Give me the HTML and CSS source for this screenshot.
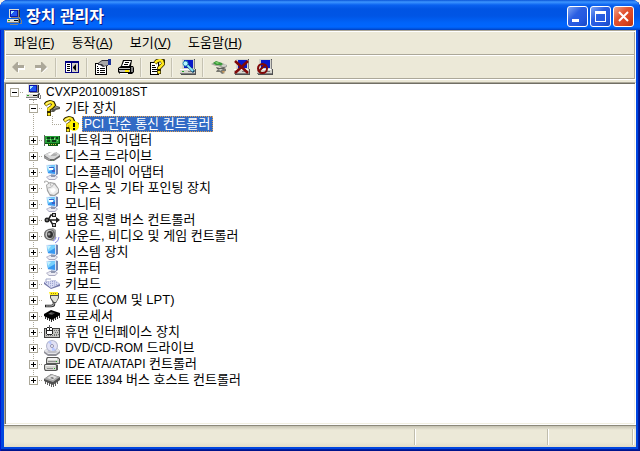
FILE: index.html
```
<!DOCTYPE html>
<html lang="ko">
<head>
    <meta charset="UTF-8">
    <meta name="viewport" content="width=device-width, initial-scale=1.0">
    <title>장치 관리자</title>
    <link rel="stylesheet" href="styles.css">
</head>
<body>
    <!-- Icon set, 16x16 grid -->
    <svg class="sprite" aria-hidden="true">
        <symbol id="i-computer" viewBox="0 0 16 16">
            <path fill="#303030" d="M5 1h9v8h-9zM2 10h12v4h-12z"/>
            <path fill="#dcdcd4" d="M3 0h10v9h-10zM1 10h12v3h-12z"/>
            <path fill="#808080" d="M12 1h1v8h-8v-1h7zM1 13h12v1h-12zM12 10h1v4h-1z"/>
            <path fill="#0a14a8" d="M4 1h8v7h-8z"/>
            <path fill="#2058f0" d="M5 2h6v5h-6z"/>
            <path fill="#a8e8ff" d="M5 2h3v1h-1v1h-1v1h-1z"/>
            <path fill="#000" d="M8 11h4v1h-4z"/>
            <path fill="#20a020" d="M2 11h2v1h-2z"/>
            <path fill="#808080" d="M13 8h1v1h1v2h1v4h-2v-1h1v-3h-1v-1h-1zM4 15h8v1h-8z"/>
        </symbol>
        <symbol id="i-question" viewBox="0 0 16 16">
            <path fill="#585850" d="M8 8l5-2 3 1v2l-4 1-2 2-3 0z"/>
            <path fill="#a8a8a0" d="M9 8l4-1 2 0-5 2z"/>
            <path fill="none" stroke="#302800" stroke-width="4" d="M1 5l2-2 3-1 3 1 1 2-2 2-3 2v3M5 12v4"/>
            <path fill="none" stroke="#ffe81c" stroke-width="2.500" d="M1.500 5l2-2 3-1 2 1 1 2-2 2-3 2v2M5 13v2.500"/>
            <path fill="none" stroke="#fff8a0" d="M2 4l2-1 2-1"/>
        </symbol>
        <symbol id="i-unknown" viewBox="0 0 16 16">
            <use href="#i-question"/>
            <circle cx="11" cy="10" r="5" fill="#fff200"/>
            <path fill="#000" d="M10 7h2v4h-2zM10 12h2v2h-2z"/>
        </symbol>
        <symbol id="i-network" viewBox="0 0 16 16">
            <path fill="#606860" d="M0 3h1v11h-1z"/>
            <path fill="#085c10" d="M1 4h15v8h-2v2h-10v-2h-3z"/>
            <path fill="#28a038" d="M1 4h14v7h-14z"/>
            <path fill="#0c3c14" d="M3 5h3v2h-3zM7 5h3v2h-3zM12 5h2v2h-2zM3 8h3v2h-3zM8 8h4v2h-4z"/>
            <path fill="#8cd48c" d="M2 7h1v1h-1zM6 7h1v1h-1zM10 6h1v2h-1zM13 8h1v1h-1z"/>
            <path fill="#d8c84c" d="M5 12h1v1h-1zM7 12h1v1h-1zM9 12h1v1h-1zM11 12h1v1h-1z"/>
        </symbol>
        <symbol id="i-disk" viewBox="0 0 16 16">
            <path fill="#686868" d="M0 7l6-3h6l4 3v2l-6 4H5L0 10z"/>
            <path fill="#989898" d="M0 8l6 3v2L0 10z"/>
            <path fill="#d8d8d8" d="M0 7l6-3h6l4 3-6 4H6z"/>
            <ellipse cx="9" cy="6.500" rx="4" ry="1.500" fill="#b0b0b0"/>
            <path fill="#fff" d="M4 6l4-2h3L6 8z"/>
            <path fill="#60a060" d="M8 12h1v1h-1z"/>
        </symbol>
        <symbol id="i-monitor" viewBox="0 0 16 16">
            <path fill="#a8a8c0" d="M2 13l4-2h5l3 2-3 3H5z"/>
            <path fill="#ececf4" d="M3 13l3-1h5l2 1-2 2H5z"/>
            <path fill="#9098b0" d="M7 10h4v3h-4z"/>
            <path fill="#7484b0" d="M11 0l3 1v9l-3 2z"/>
            <path fill="#d8e4f8" d="M2 1l10-1v11L4 10z"/>
            <path fill="#3898f0" d="M3 2l8-1v9L4 9z"/>
            <path fill="#78d0fc" d="M3 2l8-1v3L4 8z"/>
            <path fill="#c0f0ff" d="M3 2l4 0-3 4z"/>
        </symbol>
        <symbol id="i-display" viewBox="0 0 16 16">
            <use href="#i-monitor"/>
            <path fill="#3c60c8" d="M5 3h5v1h-5zM8 6h3v2h-3z"/>
            <path fill="#fff" d="M5 4h4v2h-4z"/>
        </symbol>
        <symbol id="i-mouse" viewBox="0 0 16 16">
            <path fill="none" stroke="#a8a8a8" d="M5 5Q5 1 2 1T1 3"/>
            <path fill="#a0a0a0" d="M2 5l4-3 5 1 4 6 0 4-4 3-5 0-3-5z"/>
            <path fill="#ececec" d="M3 5l3-2 4 1 4 5 0 3-4 3-4-1-2-4z"/>
            <path fill="none" stroke="#b8b8b8" d="M4 8q4 0 6-4M6 3l1 3"/>
            <path fill="#fff" d="M6 9l4-1 2 2-3 3-2-1z"/>
        </symbol>
        <symbol id="i-usb" viewBox="0 0 16 16">
            <path fill="none" stroke="#202020" stroke-width="1.500" d="M2 8h12M4 8l3-5h3M6 8l3 5h3"/>
            <circle cx="3" cy="8" r="2.500" fill="#202020"/>
            <circle cx="3" cy="8" r="1" fill="#888"/>
            <path fill="#202020" d="M12 5l4 3-4 3zM8 1h4v4H8zM8 11h4v4h-4z"/>
            <path fill="#c0c0c0" d="M9 2h2v2h-2zM9 12h2v2h-2z"/>
        </symbol>
        <symbol id="i-sound" viewBox="0 0 16 16">
            <path fill="#a0a0a0" d="M4 1l5-1 3 2v8l-3 3-5-1z"/>
            <ellipse cx="5.500" cy="6.500" rx="5.500" ry="5.500" fill="#686868"/>
            <ellipse cx="5.500" cy="6.500" rx="4" ry="4.500" fill="#c8c8c8"/>
            <ellipse cx="6" cy="6.500" rx="3" ry="3.500" fill="#303030"/>
            <circle cx="5" cy="6" r="1.500" fill="#989898"/>
            <path fill="none" stroke="#8c8ce8" d="M9 13q3-1 3-4M11 15q4-2 4-6"/>
        </symbol>
        <symbol id="i-keyboard" viewBox="0 0 16 16">
            <path fill="none" stroke="#a0a8c8" d="M2 6V3h5"/>
            <path fill="#7478a8" d="M0 6l11-2 5 4v2l-9 3L0 8z"/>
            <path fill="#dcdff6" d="M0 6l11-2 5 4-9 4z"/>
            <path stroke="#9098c8" stroke-dasharray="1 1" d="M2 6.500l10-1.500M4 8l10-1.500M6 10l9-2"/>
        </symbol>
        <symbol id="i-port" viewBox="0 0 16 16">
            <path fill="none" stroke="#202020" stroke-width="2.500" d="M10 9v3q0 2-3 2T1 14"/>
            <path fill="none" stroke="#c0c0c0" d="M10 9v3q0 2-3 2T2 14"/>
            <path fill="#505050" d="M6 1h9v5l-3 5H9L6 6z"/>
            <path fill="#e0e0d8" d="M7 4h7v2l-2 4h-2L7 6z"/>
            <path fill="#ffee20" d="M5 0h9v3H6z"/>
            <path stroke="#a08400" stroke-dasharray="1 1" d="M7 1.500h6"/>
        </symbol>
        <symbol id="i-cpu" viewBox="0 0 16 16">
            <path stroke="#303030" d="M1.500 7v4M3.500 8v4M5.500 9v4M7.500 10v4M9.500 9v4M11.500 8v4M13.500 7v4M15.500 6v4"/>
            <path fill="#000" d="M0 6l7-4 9 3v2l-8 5L0 8z"/>
            <path fill="#484848" d="M4 6l3-2 4 1-3 2z"/>
            <path fill="#909090" d="M5 6l2-1 1 0-2 1z"/>
        </symbol>
        <symbol id="i-hid" viewBox="0 0 16 16">
            <path fill="#404040" d="M0 4h16v10h-16z"/>
            <path fill="#c4c4c0" d="M1 5h14v8h-14z"/>
            <path stroke="#707070" stroke-dasharray="1 1" d="M10 6.500h5M11 8.500h4M10 10.500h5M2 11.500h12"/>
            <path fill="#202020" d="M3 3h5v1h1v6h-1v1h-5v-1h-1v-6h1z"/>
            <path fill="#fff" d="M3 4h2v2h-2zM6 4h2v2h-2zM3 7h5v3h-5z"/>
            <path fill="#606060" d="M5 1h1v3h-1z"/>
        </symbol>
        <symbol id="i-dvd" viewBox="0 0 16 16">
            <path fill="#909098" d="M0 11l4-3h9l3 3v2l-4 3H4l-4-3z"/>
            <path fill="#e4e4e8" d="M0 11l4-3h9l3 3-4 3H4z"/>
            <circle cx="8" cy="6" r="6" fill="#b0b4cc"/>
            <circle cx="8" cy="6" r="5" fill="#e2e2f4"/>
            <path fill="#b8c8ff" d="M8 6L4 2l3-1zM8 6l4 4-4 1z"/>
            <circle cx="8" cy="6" r="1.500" fill="#fff" stroke="#9090b0"/>
            <path fill="#c0c0c8" d="M2 12l3-1h7l2 1-3 1H5z"/>
        </symbol>
        <symbol id="i-ide" viewBox="0 0 16 16">
            <path fill="#585858" d="M3 1h11l2 2v5h-14v-5zM1 8h11l2 1v5l-2 1h-11l-1-2v-4z"/>
            <path fill="#d4d4d0" d="M4 2h9l2 1v4h-12v-4zM1 9h11v5h-10l-1-1z"/>
            <path fill="#f4f4f4" d="M4 2h9v2h-9zM2 9h9v1h-9z"/>
            <path fill="#909090" d="M4 5h8v1h-8zM3 12h6v1h-6z"/>
            <path fill="#20b020" d="M12 5h1v1h-1zM10 12h1v1h-1z"/>
        </symbol>
        <symbol id="i-1394" viewBox="0 0 16 16">
            <path stroke="#606060" d="M1.500 8v4M3.500 9v4M5.500 10v4M7.500 11v4M9.500 11v4M11.500 10v4M13.500 8v4"/>
            <path fill="#505050" d="M0 7l7-5 9 3v3l-7 5-9-4z"/>
            <path fill="#a8a8a8" d="M0 7l7-5 9 3-7 5z"/>
            <path fill="#e0e0e0" d="M3 6l5-3 5 2-4 3z"/>
            <path fill="#707070" d="M6 6l2-1 2 1-1 1z"/>
        </symbol>
        <symbol id="i-back" viewBox="0 0 16 16">
            <path fill="#fff" d="M3 9l6-5v3h6v4h-6v3z"/>
            <path fill="#aca899" d="M2 8l5-5h1v3h6v3h-6v4h-1z"/>
        </symbol>
        <symbol id="i-forward" viewBox="0 0 16 16">
            <path fill="#fff" d="M15 9l-6-5v3h-6v4h6v3z"/>
            <path fill="#aca899" d="M14 8l-5-5h-1v3h-6v3h6v4h1z"/>
        </symbol>
        <symbol id="i-console" viewBox="0 0 16 16">
            <path fill="#000080" d="M1 2h14v12h-14z"/>
            <path fill="#fff" d="M2 4h5v9h-5z"/>
            <path fill="#d4d0c8" d="M8 4h6v9h-6z"/>
            <path fill="#000" d="M3 5h3v1h-3zM3 7h3v1h-3zM3 9h3v1h-3zM3 11h3v1h-3zM12 5v7l-3-3v-1z"/>
        </symbol>
        <symbol id="i-properties" viewBox="0 0 16 16">
            <path fill="#000" d="M0 4h12v12h-12z"/>
            <path fill="#fff" d="M1 5h10v10h-10z"/>
            <path fill="#000" d="M2 9h2v1h-2zM5 9h5v1h-5zM2 11h2v1h-2zM5 11h5v1h-5zM2 13h2v1h-2zM5 13h5v1h-5zM2 7h1v1h-1z"/>
            <path fill="#303038" d="M3 4l4-3 6 0v6h-2l-3 1-3-2-2 0z"/>
            <path fill="#a8a8a8" d="M4 4l3-2 6 0v4l-4 1-2-2-3 0z"/>
            <path fill="#1c3498" d="M13 0h3v6h-3z"/>
        </symbol>
        <symbol id="i-print" viewBox="0 0 16 16">
            <path fill="#000" d="M5 1h9l-1 6h2l1 2v4l-2 2h-12l-2-2v-4l3-2z"/>
            <path fill="#fff" d="M6 2h7l-2 5h-7z"/>
            <path stroke="#000" d="M7 3.500h4M6 5.500h4"/>
            <path fill="#c0c0c0" d="M1 9h11v1h-11zM1 11h11v2h-10l-1-1z"/>
            <path fill="#808080" d="M13 8h2v5h-2z"/>
            <path fill="#ffe800" d="M7 11h4v2h-4z"/>
            <path fill="#fff" d="M2 14h8v1h-8z"/>
        </symbol>
        <symbol id="i-help" viewBox="0 0 16 16">
            <path fill="#000" d="M1 3h9v13h-9z"/>
            <path fill="#fff" d="M2 4h7v11h-7z"/>
            <path fill="#000" d="M3 6h3v1h-3zM3 8h4v1h-4zM3 10h5v1h-5zM3 12h5v1h-5z"/>
            <path fill="none" stroke="#302800" stroke-width="4" d="M6 4l2-2 3-1 3 1 0 3-2 2-2 2v2M10 11v4"/>
            <path fill="none" stroke="#ffe81c" stroke-width="2.500" d="M6 4l2-2 3-1 2 1 1 3-2 2-2 2v1M10 12v2.500"/>
        </symbol>
        <symbol id="i-pc" viewBox="0 0 16 16">
            <path fill="#505050" d="M3 0h12v10h1v6h-15v-1h-1v-5h3z"/>
            <path fill="#d4d4cc" d="M2 0h12v10h-12zM0 10h15v5h-15z"/>
            <path fill="#0818c8" d="M4 1h9v8h-9z"/>
            <path fill="#808080" d="M14 1h1v9h-1zM8 12h5v1h-5zM0 14h15v1h-15z"/>
            <path fill="#fff" d="M0 10h14v1h-14z"/>
            <path fill="#20a020" d="M2 12h2v1h-2z"/>
        </symbol>
        <symbol id="i-scan" viewBox="0 0 16 16">
            <use href="#i-pc"/>
            <path stroke="#003860" stroke-width="3" d="M7 6l7 7"/>
            <path stroke="#90e8f8" stroke-width="2" d="M7 6l6 6"/>
            <circle cx="5.500" cy="4.500" r="2.500" fill="#b8f4ff" stroke="#2888b0"/>
        </symbol>
        <symbol id="i-update" viewBox="0 0 16 16">
            <path fill="#787870" d="M6 11l5-2 4 1v2l-3 1 2 1-3 1-2-2-4 0z"/>
            <path fill="#a8a8a0" d="M0 5l4-2 7 1 5 2v2l-5 1-4-2-2 0-3-1z"/>
            <path fill="#60605c" d="M5 8l4 1 4-1 2 1-5 2-4-1z"/>
            <path fill="#389838" d="M2 4l3-2 6 2 1 3-4-1-3 0z"/>
            <path fill="#80d070" d="M4 3l2 0 3 1-3 1z"/>
            <path fill="#d0d0c8" d="M10 6l5-1v2l-3 1zM8 10l4 0-3 2z"/>
            <path fill="#c89858" d="M11 12l2 0 1 1-2 1z"/>
        </symbol>
        <symbol id="i-uninstall" viewBox="0 0 16 16">
            <use href="#i-pc"/>
            <path stroke="#800808" stroke-width="2.500" d="M1 2l13 12M14 2L1 14"/>
        </symbol>
        <symbol id="i-disable" viewBox="0 0 16 16">
            <use href="#i-pc"/>
            <circle cx="5.500" cy="9.500" r="4.500" fill="none" stroke="#800808" stroke-width="2"/>
            <path stroke="#800808" stroke-width="2" d="M2 12l6-6"/>
        </symbol>
    </svg>

    <div class="window">
        <header class="titlebar">
            <svg class="icon"><use href="#i-computer"/></svg>
            <h1>장치 관리자</h1>
            <div class="caption-buttons">
                <button type="button" aria-label="최소화"><svg viewBox="0 0 21 21"><path fill="#fff" d="M5 13h7v3h-7z"/></svg></button>
                <button type="button" aria-label="최대화"><svg viewBox="0 0 21 21"><path fill="#fff" fill-rule="evenodd" d="M5 5h11v11h-11zM6 8v7h9v-7z"/></svg></button>
                <button type="button" class="close" aria-label="닫기"><svg viewBox="0 0 21 21"><path stroke="#fff" stroke-width="2" d="M6 6l9 9M15 6l-9 9"/></svg></button>
            </div>
        </header>

        <div class="bars">
            <nav class="menubar">
                <button type="button">파일(<u>F</u>)</button>
                <button type="button">동작(<u>A</u>)</button>
                <button type="button">보기(<u>V</u>)</button>
                <button type="button">도움말(<u>H</u>)</button>
            </nav>
            <div class="toolbar">
                <button type="button" aria-label="뒤로" disabled><svg class="icon"><use href="#i-back"/></svg></button>
                <button type="button" aria-label="앞으로" disabled><svg class="icon"><use href="#i-forward"/></svg></button>
                <span class="sep"></span>
                <button type="button" aria-label="콘솔 트리"><svg class="icon"><use href="#i-console"/></svg></button>
                <span class="sep"></span>
                <button type="button" aria-label="속성"><svg class="icon"><use href="#i-properties"/></svg></button>
                <button type="button" aria-label="인쇄"><svg class="icon"><use href="#i-print"/></svg></button>
                <span class="sep"></span>
                <button type="button" aria-label="도움말"><svg class="icon"><use href="#i-help"/></svg></button>
                <span class="sep"></span>
                <button type="button" aria-label="하드웨어 변경 사항 검색"><svg class="icon"><use href="#i-scan"/></svg></button>
                <span class="sep"></span>
                <button type="button" aria-label="드라이버 업데이트"><svg class="icon"><use href="#i-update"/></svg></button>
                <button type="button" aria-label="제거"><svg class="icon"><use href="#i-uninstall"/></svg></button>
                <button type="button" aria-label="사용 안 함"><svg class="icon"><use href="#i-disable"/></svg></button>
            </div>
        </div>

        <main class="tree-panel">
            <ul class="tree">
                <li>
                    <div class="node"><span class="branch"><button type="button" class="toggle open" aria-label="축소"></button></span><svg class="icon"><use href="#i-computer"/></svg><span class="label"><span class="latin">CVXP20100918ST</span></span></div>
                    <ul>
                        <li>
                            <div class="node"><span class="branch"><button type="button" class="toggle open" aria-label="축소"></button></span><svg class="icon"><use href="#i-question"/></svg><span class="label">기타 장치</span></div>
                            <ul>
                                <li>
                                    <div class="node"><span class="branch"></span><svg class="icon"><use href="#i-unknown"/></svg><span class="label selected"><span class="latin">PCI</span> 단순 통신 컨트롤러</span></div>
                                </li>
                            </ul>
                        </li>
                        <li><div class="node"><span class="branch"><button type="button" class="toggle" aria-label="확장"></button></span><svg class="icon"><use href="#i-network"/></svg><span class="label">네트워크 어댑터</span></div></li>
                        <li><div class="node"><span class="branch"><button type="button" class="toggle" aria-label="확장"></button></span><svg class="icon"><use href="#i-disk"/></svg><span class="label">디스크 드라이브</span></div></li>
                        <li><div class="node"><span class="branch"><button type="button" class="toggle" aria-label="확장"></button></span><svg class="icon"><use href="#i-display"/></svg><span class="label">디스플레이 어댑터</span></div></li>
                        <li><div class="node"><span class="branch"><button type="button" class="toggle" aria-label="확장"></button></span><svg class="icon"><use href="#i-mouse"/></svg><span class="label">마우스 및 기타 포인팅 장치</span></div></li>
                        <li><div class="node"><span class="branch"><button type="button" class="toggle" aria-label="확장"></button></span><svg class="icon"><use href="#i-display"/></svg><span class="label">모니터</span></div></li>
                        <li><div class="node"><span class="branch"><button type="button" class="toggle" aria-label="확장"></button></span><svg class="icon"><use href="#i-usb"/></svg><span class="label">범용 직렬 버스 컨트롤러</span></div></li>
                        <li><div class="node"><span class="branch"><button type="button" class="toggle" aria-label="확장"></button></span><svg class="icon"><use href="#i-sound"/></svg><span class="label">사운드, 비디오 및 게임 컨트롤러</span></div></li>
                        <li><div class="node"><span class="branch"><button type="button" class="toggle" aria-label="확장"></button></span><svg class="icon"><use href="#i-monitor"/></svg><span class="label">시스템 장치</span></div></li>
                        <li><div class="node"><span class="branch"><button type="button" class="toggle" aria-label="확장"></button></span><svg class="icon"><use href="#i-monitor"/></svg><span class="label">컴퓨터</span></div></li>
                        <li><div class="node"><span class="branch"><button type="button" class="toggle" aria-label="확장"></button></span><svg class="icon"><use href="#i-keyboard"/></svg><span class="label">키보드</span></div></li>
                        <li><div class="node"><span class="branch"><button type="button" class="toggle" aria-label="확장"></button></span><svg class="icon"><use href="#i-port"/></svg><span class="label">포트 (COM 및 LPT)</span></div></li>
                        <li><div class="node"><span class="branch"><button type="button" class="toggle" aria-label="확장"></button></span><svg class="icon"><use href="#i-cpu"/></svg><span class="label">프로세서</span></div></li>
                        <li><div class="node"><span class="branch"><button type="button" class="toggle" aria-label="확장"></button></span><svg class="icon"><use href="#i-hid"/></svg><span class="label">휴먼 인터페이스 장치</span></div></li>
                        <li><div class="node"><span class="branch"><button type="button" class="toggle" aria-label="확장"></button></span><svg class="icon"><use href="#i-dvd"/></svg><span class="label"><span class="latin">DVD/CD-ROM</span> 드라이브</span></div></li>
                        <li><div class="node"><span class="branch"><button type="button" class="toggle" aria-label="확장"></button></span><svg class="icon"><use href="#i-ide"/></svg><span class="label"><span class="latin">IDE ATA/ATAPI</span> 컨트롤러</span></div></li>
                        <li><div class="node"><span class="branch"><button type="button" class="toggle" aria-label="확장"></button></span><svg class="icon"><use href="#i-1394"/></svg><span class="label"><span class="latin">IEEE 1394</span> 버스 호스트 컨트롤러</span></div></li>
                    </ul>
                </li>
            </ul>
        </main>

        <footer class="statusbar">
            <span></span>
            <span></span>
            <span></span>
        </footer>
    </div>
</body>
</html>
```
FILE: styles.css
```
* {
    margin: 0;
    padding: 0;
    box-sizing: border-box;
}
body {
    background: #f4f2ea;
    color: #000;
    font-family: "Liberation Sans", "Noto Sans CJK KR", sans-serif;
    font-size: 13px;
}
button {
    font: inherit;
    color: inherit;
    background: none;
    border: none;
}
ul {
    list-style: none;
}
.sprite {
    display: none;
}
.icon {
    display: block;
    flex: none;
    width: 16px;
    height: 16px;
}
.latin {
    font-size: 12px;
}

/* Window frame */
.window {
    display: flex;
    flex-direction: column;
    min-height: 100vh;
    padding: 0 4px 4px;
    background: #0046e0;
    border-radius: 8px 8px 0 0;
    box-shadow: inset 1px 0 #0019cf, inset -1px -1px #00138c, inset -2px -2px #001ea0;
}
.titlebar {
    display: flex;
    align-items: center;
    gap: 4px;
    height: 30px;
    margin: 0 -4px;
    padding: 3px 6px 0;
    border-radius: 8px 8px 0 0;
    background: linear-gradient(#0a54d8 0, #3d95ff 2px, #0a62f0 5px, #0054e3 9px, #0055e5 16px, #0064fa 23px, #0066ff 27px, #0050d8 29px, #003cc0 30px);
    color: #fff;
}
.titlebar h1 {
    flex: 1;
    font-size: 16px;
    font-weight: 700;
    line-height: 20px;
    text-shadow: 1px 1px #0a1883;
}
.caption-buttons {
    display: flex;
    gap: 2px;
}
.caption-buttons button {
    width: 21px;
    height: 21px;
    border: 1px solid #fff;
    border-radius: 3px;
    background: linear-gradient(135deg, #7ea4f4, #2b5fe2 40%, #2458e0 70%, #1848c4);
}
.caption-buttons .close {
    background: linear-gradient(135deg, #f0a48c, #e25432 40%, #da4420 70%, #b83410);
}
.caption-buttons svg {
    display: block;
    width: 21px;
    height: 21px;
    margin: -1px;
}

/* Menu and toolbar */
.bars {
    border: 1px solid #aca899;
    border-right-color: #fff;
    border-bottom-color: #fff;
    background: #ece9d8;
    box-shadow: inset 1px 1px #fff, inset -1px -1px #aca899;
    padding: 1px;
}
.menubar {
    display: flex;
    gap: 1px;
    height: 23px;
    border-bottom: 1px solid #aca899;
}
.menubar button {
    padding: 0 8px;
    line-height: 22px;
}
.toolbar {
    display: flex;
    align-items: center;
    height: 23px;
    border-top: 1px solid #fff;
}
.toolbar button {
    display: grid;
    place-items: center;
    width: 23px;
    height: 22px;
}
.sep {
    width: 2px;
    height: 19px;
    margin: 0 3px;
    border-left: 1px solid #c5c2b2;
    border-right: 1px solid #f4f2e8;
}

/* Device tree */
.tree-panel {
    flex: 1;
    border: 1px solid #aca899;
    border-right-color: #fff;
    border-bottom-color: #fff;
    outline: 2px solid #ece9d8;
    margin-top: 2px;
    background: #fff;
    box-shadow: inset 1px 1px #716f64, inset -1px -1px #f1efe2;
    padding: 1px;
    clip-path: inset(-2px 0 0 0);
}
.tree ul {
    margin-left: 19px;
}
.tree ul > li {
    background: repeating-linear-gradient(#aca899 0 1px, transparent 1px 2px) 8px 0 / 1px 100% no-repeat;
}
.tree ul > li:last-child {
    background-size: 1px 8px;
}
.node {
    display: flex;
    align-items: center;
    height: 16px;
}
.branch {
    flex: none;
    display: flex;
    align-items: center;
    width: 19px;
    height: 16px;
    padding-left: 4px;
    background: repeating-linear-gradient(90deg, #aca899 0 1px, transparent 1px 2px) 8px 8px / 10px 1px no-repeat;
}
.toggle {
    width: 9px;
    height: 9px;
    border: 1px solid #aca899;
    background:
        linear-gradient(#000, #000) center / 5px 1px no-repeat,
        linear-gradient(#000, #000) center / 1px 5px no-repeat,
        #fff;
}
.toggle.open {
    background:
        linear-gradient(#000, #000) center / 5px 1px no-repeat,
        #fff;
}
.label {
    margin-left: 3px;
    padding: 0 2px;
    line-height: 16px;
    height: 16px;
    white-space: nowrap;
}
.label.selected {
    background: #316ac5;
    color: #fff;
    outline: 1px dotted #e0a050;
    outline-offset: -1px;
}

/* Status bar */
.statusbar {
    display: grid;
    grid-template-columns: 1fr 133px 85px;
    height: 22px;
    padding: 3px 2px 2px 0;
    border-top: 1px solid #8c897a;
    background: linear-gradient(#c5c2b2, #ece9d8 4px, #ece9d8 16px, #e0dcc8);
}
.statusbar span {
    border-right: 1px solid #fff;
    box-shadow: inset -1px 0 #c0bdad;
}
```
